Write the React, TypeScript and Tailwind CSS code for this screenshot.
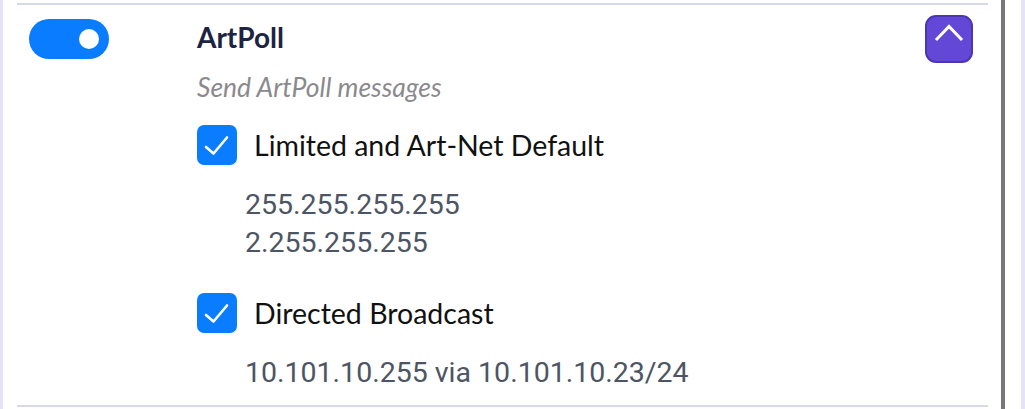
import { useState } from "react";

function Check() {
  return (
    <span className="flex w-[40px] h-[40px] shrink-0 items-center justify-center rounded-[7px] bg-[#0a7cff]">
      <svg width="40" height="40" viewBox="0 0 40 40" fill="none">
        <polyline
          points="9,22 16.5,28.5 30,12.5"
          stroke="white"
          strokeWidth="2.6"
          strokeLinecap="round"
          strokeLinejoin="round"
        />
      </svg>
    </span>
  );
}

function Option({
  label,
  lines,
}: {
  label: string;
  lines: string[];
}) {
  return (
    <div className="flex flex-col">
      <label className="flex items-center gap-[17px]">
        <Check />
        <span className="text-[28.5px] leading-[32px] text-[#111111]">{label}</span>
      </label>
      <div className="pl-[48px] mt-[21px] font-['Roboto',sans-serif] text-[28.5px] leading-[38px] text-[#4d5564]">
        {lines.map((l) => (
          <div key={l}>{l}</div>
        ))}
      </div>
    </div>
  );
}

export default function App() {
  const [on, setOn] = useState(true);
  const [open, setOpen] = useState(true);

  return (
    <div className="flex h-[409px] w-[1025px] bg-white font-['Lato',sans-serif]">
      <div className="w-[3px] bg-[#e6e3f8]" />
      <div className="flex-1 pl-[14px] pr-[13px] pt-[3px] pb-[2px]">
        <div className="flex h-full items-start border-y-2 border-[#d6dae8]">
          {/* toggle */}
          <button
            type="button"
            onClick={() => setOn(!on)}
            className="ml-[12px] mt-[14px] flex h-[40px] w-[80px] shrink-0 items-center justify-end rounded-full bg-[#0a7cff] pr-[10px]"
          >
            <span className="h-[20px] w-[20px] rounded-full bg-white" />
          </button>

          <div className="ml-[88px] flex flex-1 flex-col pt-[16px]">
            <h2 className="text-[28px] font-bold leading-[32px] text-[#1c2343]">ArtPoll</h2>
            <p className="mt-[20px] text-[26.5px] italic leading-[28px] text-[#8a8a8e]">
              Send ArtPoll messages
            </p>
            {open && (
              <div className="mt-[24px] flex flex-col gap-[31px]">
                <Option
                  label="Limited and Art-Net Default"
                  lines={["255.255.255.255", "2.255.255.255"]}
                />
                <Option
                  label="Directed Broadcast"
                  lines={["10.101.10.255 via 10.101.10.23/24"]}
                />
              </div>
            )}
          </div>

          <button
            type="button"
            onClick={() => setOpen(!open)}
            className="mr-[15px] mt-[10px] flex h-[48px] w-[48px] shrink-0 items-center justify-center rounded-[11px] border-2 border-[#4b36b3] bg-[#6347d7]"
          >
            <svg width="44" height="44" viewBox="0 0 44 44" fill="none">
              <polyline
                points="10,22 22,9.5 34,22"
                stroke="white"
                strokeWidth="3"
                strokeLinecap="square"
              />
            </svg>
          </button>
        </div>
      </div>
      <div className="w-[4px] bg-[#777777]" />
      <div className="w-[16px] bg-white" />
      <div className="w-[4px] bg-[#e6e3f8]" />
    </div>
  );
}
